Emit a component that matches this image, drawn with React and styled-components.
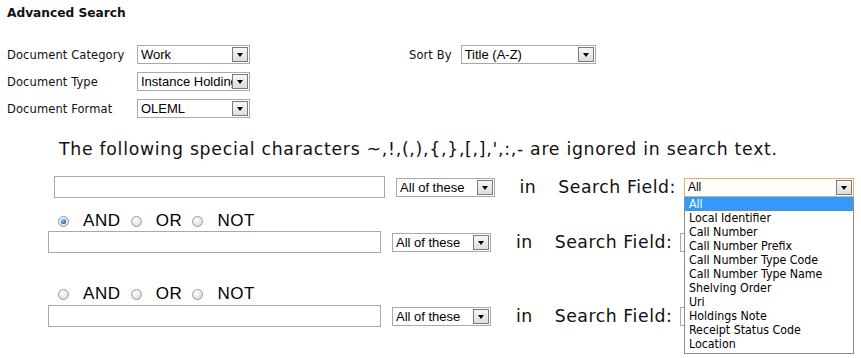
import React from "react";
import styled, { createGlobalStyle } from "styled-components";

const Global = createGlobalStyle`
  html, body { margin: 0; padding: 0; background: #fff; }
  body { font-family: "DejaVu Sans", Verdana, sans-serif; color: #111; }
`;

const Page = styled.div`
  padding: 5px 7px;
  width: 861px;
  height: 358px;
  box-sizing: border-box;
  overflow: hidden;
`;

const Title = styled.h1`
  margin: 0;
  font-size: 12.2px;
  line-height: 16px;
  font-weight: bold;
  color: #111;
`;

const TopForm = styled.div`
  display: flex;
  align-items: flex-start;
  margin-top: 24px;
`;

const FieldGrid = styled.div`
  display: grid;
  grid-template-columns: 130px 113px;
  row-gap: 8px;
  align-items: center;
`;

const Label = styled.span`
  font-size: 11.5px;
  letter-spacing: 0.1px;
  white-space: nowrap;
`;

const SortBlock = styled.div`
  display: flex;
  align-items: center;
  gap: 9px;
  margin-left: 159px;
`;

const SelectBox = styled.div`
  position: relative;
  box-sizing: border-box;
  width: ${(p) => p.$w}px;
  height: ${(p) => p.$h || 19}px;
  border: 1px solid ${(p) => (p.$focus ? "#e3b25e" : "#a9a9a9")};
  background: #fff;
  display: flex;
  align-items: center;
  padding-left: 3px;
  font-family: "Liberation Sans", Arial, sans-serif;
  font-size: ${(p) => p.$fs || 13}px;
  color: #000;
  white-space: nowrap;
`;

const SelectText = styled.span`
  flex: 1;
  overflow: hidden;
`;

const ArrowButton = styled.span`
  box-sizing: border-box;
  flex: none;
  width: 16px;
  height: 15px;
  margin-right: 1px;
  border: 1px solid #7a7a7a;
  background: linear-gradient(#f6f6f6, #dedede);
  display: flex;
  align-items: center;
  justify-content: center;
  &::after {
    content: "";
    width: 0;
    height: 0;
    border-left: 3.5px solid transparent;
    border-right: 3.5px solid transparent;
    border-top: 4px solid #000;
    margin-top: 1px;
  }
`;

function Select({ w, h, fs, focus, value, children }) {
  return (
    <SelectBox $w={w} $h={h} $fs={fs} $focus={focus}>
      <SelectText>{value}</SelectText>
      <ArrowButton />
      {children}
    </SelectBox>
  );
}

const Notice = styled.p`
  margin: 20px 0 0 52px;
  font-size: 17.3px;
  line-height: 22px;
  letter-spacing: 0.72px;
  white-space: nowrap;
`;

const SearchRow = styled.div`
  display: flex;
  align-items: center;
  margin-left: ${(p) => p.$indent}px;
  margin-top: ${(p) => p.$top}px;
`;

const TextInput = styled.div`
  box-sizing: border-box;
  width: 333px;
  height: 22px;
  border: 1px solid #a9a9a9;
  background: #fff;
  margin-right: 11px;
`;

const InWord = styled.span`
  font-size: 17.3px;
  letter-spacing: 0.45px;
  margin-left: 25px;
`;

const FieldLabel = styled.span`
  font-size: 17.3px;
  letter-spacing: 0.55px;
  margin-left: 22px;
  margin-right: 8px;
  white-space: nowrap;
`;

const RadioRow = styled.div`
  display: flex;
  align-items: center;
  margin-left: ${(p) => p.$indent}px;
  margin-top: ${(p) => p.$top}px;
  height: 18px;
`;

const RadioItem = styled.label`
  display: flex;
  align-items: center;
  margin-right: 10px;
  font-family: "Liberation Sans", Arial, sans-serif;
  font-size: 17px;
  letter-spacing: 0.6px;
  color: #000;
`;

const RadioDot = styled.span`
  box-sizing: border-box;
  width: 11px;
  height: 11px;
  border-radius: 50%;
  border: 1px solid #9a9a9a;
  background: radial-gradient(circle at 40% 35%, #ffffff, #dcdcdc 75%);
  margin-right: 14px;
  display: flex;
  align-items: center;
  justify-content: center;
  &::after {
    content: "";
    display: ${(p) => (p.$checked ? "block" : "none")};
    width: 5px;
    height: 5px;
    border-radius: 50%;
    background: radial-gradient(circle at 40% 35%, #9fd3ff, #2a6fb8 55%, #0d3f7a);
  }
`;

const DropList = styled.ul`
  position: absolute;
  top: 18px;
  left: -1px;
  right: -1px;
  margin: 0;
  padding: 0 0 2px;
  list-style: none;
  box-sizing: border-box;
  background: #fff;
  border: 1px solid #8d8d8d;
  border-top: none;
  z-index: 5;
  font-family: "DejaVu Sans Condensed", Tahoma, sans-serif;
  font-size: 12.3px;
`;

const DropItem = styled.li`
  height: 14px;
  line-height: 14px;
  padding-left: 4px;
  color: ${(p) => (p.$active ? "#fff" : "#000")};
  background: ${(p) => (p.$active ? "#3399ff" : "transparent")};
`;

const fields = [
  "All",
  "Local Identifier",
  "Call Number",
  "Call Number Prefix",
  "Call Number Type Code",
  "Call Number Type Name",
  "Shelving Order",
  "Uri",
  "Holdings Note",
  "Receipt Status Code",
  "Location",
];

function Radios({ indent, top, checked }) {
  return (
    <RadioRow $indent={indent} $top={top}>
      {["AND", "OR", "NOT"].map((op) => (
        <RadioItem key={op}>
          <RadioDot $checked={checked === op} />
          {op}
        </RadioItem>
      ))}
    </RadioRow>
  );
}

function Row({ indent, top, open }) {
  return (
    <SearchRow $indent={indent} $top={top}>
      <TextInput />
      <Select w={99} value="All of these" />
      <InWord>in</InWord>
      <FieldLabel>Search Field:</FieldLabel>
      <Select w={171} fs={12} focus={open} value="All">
        {open && (
          <DropList>
            {fields.map((f, i) => (
              <DropItem key={f} $active={i === 0}>
                {f}
              </DropItem>
            ))}
          </DropList>
        )}
      </Select>
    </SearchRow>
  );
}

export default function App() {
  return (
    <>
      <Global />
      <Page>
        <Title>Advanced Search</Title>
        <TopForm>
          <FieldGrid>
            <Label>Document Category</Label>
            <Select w={113} value="Work" />
            <Label>Document Type</Label>
            <Select w={113} value="Instance Holdings" />
            <Label>Document Format</Label>
            <Select w={113} value="OLEML" />
          </FieldGrid>
          <SortBlock>
            <Label>Sort By</Label>
            <Select w={135} value="Title (A-Z)" />
          </SortBlock>
        </TopForm>
        <Notice>
          The following special characters ~,!,(,),{"{"},{"}"},[,],',:,- are ignored in search text.
        </Notice>
        <Row indent={47} top={16} open />
        <Radios indent={51} top={14} checked="AND" />
        <Row indent={41} top={1} />
        <Radios indent={51} top={32} />
        <Row indent={41} top={2} />
      </Page>
    </>
  );
}
